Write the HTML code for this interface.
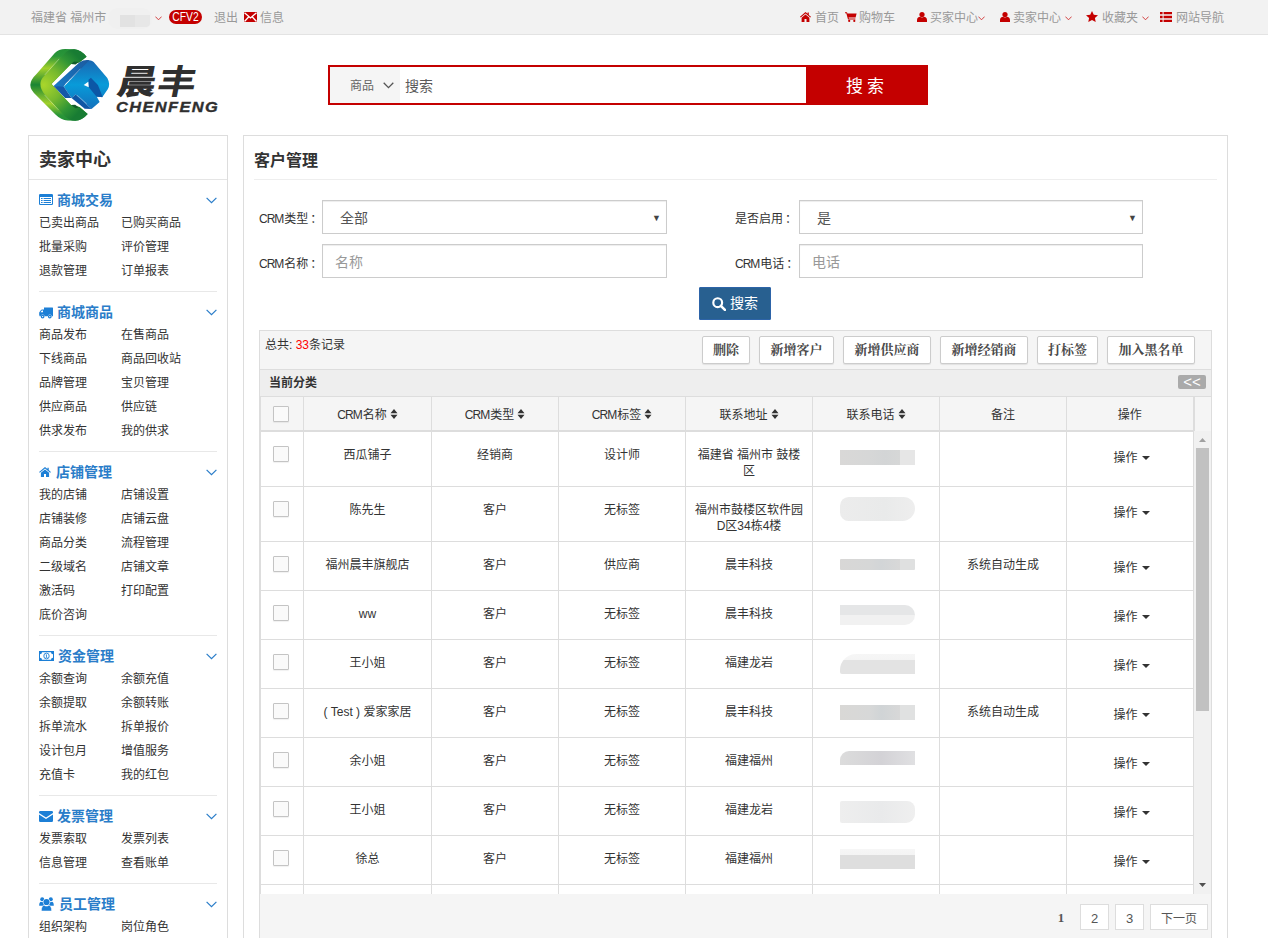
<!DOCTYPE html>
<html lang="zh-CN">
<head>
<meta charset="utf-8">
<title>客户管理</title>
<style>
*{box-sizing:border-box;margin:0;padding:0}
html,body{width:1268px;height:938px;overflow:hidden;background:#fff}
body{font-family:"Liberation Sans","Noto Sans CJK SC",sans-serif;font-size:12px;color:#333;position:relative}
a{color:inherit;text-decoration:none}
svg{display:block}
.abs{position:absolute}
/* top bar */
#topbar{position:absolute;left:0;top:0;width:1268px;height:35px;background:#f2f2f2;border-bottom:1px solid #e3e3e3;color:#999}
#topbar .t{position:absolute;top:0;height:34px;line-height:36px;white-space:nowrap;font-size:12px}
#topbar .i{position:absolute}
.red{color:#c40000}
/* search */
#search{position:absolute;left:328px;top:65px;width:600px;height:40px;border:2px solid #c40000;background:#fff}
#search .cat{position:absolute;left:0;top:0;width:70px;height:36px;background:#f5f5f5;color:#666;font-size:12px;line-height:38px}
#search .kw{position:absolute;left:75px;top:0;height:36px;line-height:38px;font-size:14px;color:#5a5a5a}
#search .btn{position:absolute;left:476px;top:-2px;width:122px;height:40px;background:#c40000;color:#fff;font-size:17px;line-height:43px;text-align:center;letter-spacing:4px;overflow:hidden}
/* sidebar */
#side{position:absolute;left:28px;top:135px;width:200px;height:820px;border:1px solid #ddd;background:#fff}
#side h2{height:44px;line-height:48px;padding-left:10px;font-size:18px;font-weight:bold;color:#333;border-bottom:1px solid #e5e5e5}
.sec{margin:0 10px;padding:9px 0 8px;border-bottom:1px solid #e8e8e8;position:relative}
.sec h3{height:22px;line-height:22px;font-size:14px;font-weight:bold;color:#2a7dc9;position:relative;padding-left:19px}
.sec h3 svg{position:absolute;left:0;top:5px}
.sec h3 .chev{position:absolute;left:167px;top:8px}
.sec ul{list-style:none;overflow:hidden}
.sec li{float:left;width:82px;height:24px;line-height:24px;font-size:12px;color:#333;white-space:nowrap}
/* main */
#main{position:absolute;left:243px;top:135px;width:985px;height:820px;border:1px solid #ddd;background:#fff}
#main h1{position:absolute;left:10px;top:0;width:963px;height:44px;line-height:50px;overflow:hidden;font-size:16px;font-weight:bold;color:#333;border-bottom:1px solid #eee}
.lbl{position:absolute;font-size:12px;color:#333;height:34px;line-height:36px;white-space:nowrap}
.la{letter-spacing:-1px;margin-right:1px}
.co{margin-left:2px}
.fld{position:absolute;height:34px;border:1px solid #ccc;background:#fff;font-size:14px;line-height:34px;color:#555;box-shadow:inset 0 1px 1px rgba(0,0,0,.075);overflow:hidden}
.fld.ph{color:#999}
.fld .arr{position:absolute;right:5px;top:0;font-size:9px;color:#444}
#sbtn{position:absolute;left:455px;top:151px;width:72px;height:33px;background:#286090;border:1px solid #2d64a8;border-radius:1px;color:#fff;font-size:14px;line-height:31px}
#panel{position:absolute;left:15px;top:194px;width:953px;height:640px;border:1px solid #ddd;background:#f5f5f5}
.tb{position:absolute;top:5px;height:28px;border:1px solid #ccc;border-radius:2px;background:#fff;color:#4a4a4a;box-shadow:0 1px 1px rgba(0,0,0,.08);font-family:"Liberation Serif","Noto Serif CJK SC",serif;font-weight:bold;font-size:13px;line-height:26px;text-align:center;white-space:nowrap}
#cur{position:absolute;left:0;top:38px;width:951px;height:27px;background:#eee;border-top:1px solid #ddd;font-weight:bold;font-size:12px;line-height:27px;padding-left:9px}
#cur span{position:absolute;left:918px;top:5px;width:28px;height:14px;background:#aaa;color:#fff;border-radius:2px;font-size:15px;line-height:13px;text-align:center;font-weight:normal;letter-spacing:0}
table{border-collapse:collapse;table-layout:fixed;position:absolute;left:0;top:65px;background:#fff}
th,td{border:1px solid #ddd;text-align:center;font-weight:normal;font-size:12px;color:#333;vertical-align:top}
th{height:34px;background:#f5f5f5;border-bottom:2px solid #ddd;vertical-align:middle;padding-top:1px}
th:last-child{border-right:2px solid #ddd}
.cb{display:block;width:16px;height:16px;border:1px solid #c4c4c4;background:#fafafa;border-radius:1px;margin:0 0 0 12px;box-shadow:0 1px 1px rgba(0,0,0,.06)}

td.c{padding:15px 8px 0;line-height:16px}
#tw{position:absolute;left:0;top:0;width:951px;height:563px;overflow:hidden}
.bl{display:block;width:75px;margin:0 0 0 19px}
#vs{position:absolute;left:934px;top:100px;width:17px;height:463px;background:#f1f1f1}
#vs i{position:absolute;left:2px;top:17px;width:13px;height:263px;background:#c1c1c1}
.pg{position:absolute;top:573px;height:26px;border:1px solid #ddd;background:#fff;font-size:13px;line-height:27px;text-align:center;color:#555;overflow:hidden}
</style>
</head>
<body>
<div id="topbar">
<span class="t" style="left:31px">福建省 福州市</span>
<span class="i" style="left:108px;top:8px;width:44px;height:21px;background:#f0f0f0;border-radius:10px"></span><span class="i" style="left:120px;top:15px;width:30px;height:12px;background:linear-gradient(90deg,#e2e2e2 0,#e2e2e2 50%,#e7e7e7 50%,#e7e7e7 100%);border-radius:0 0 4px 0"></span>
<svg class="i" style="left:155px;top:16px" width="7" height="5" viewBox="0 0 7 5"><path d="M0.4 0.6 L3.5 3.8 L6.6 0.6" fill="none" stroke="#cf3030" stroke-width="0.9"/></svg>
<span class="i" style="left:169px;top:10px;width:33px;height:14px;border-radius:7px;background:#c40000;color:#fff;font-size:12px;line-height:15px;text-align:center"><b style="display:block;font-weight:normal;transform:scaleX(.86)">CFV2</b></span>
<span class="t" style="left:214px">退出</span>
<svg class="i" style="left:244px;top:12px" width="13" height="10" viewBox="0 0 13 10"><rect width="13" height="10" fill="#c40000"/><path d="M0.5 0.8 L6.5 6 L12.5 0.8 M0.5 9.5 L4.6 5 M12.5 9.5 L8.4 5" fill="none" stroke="#fff" stroke-width="1.3"/></svg>
<span class="t" style="left:260px">信息</span>

<svg class="i" style="left:800px;top:12px" width="11" height="10" viewBox="0 0 11 10"><path d="M5.5 0 L0 4.8 L0.7 5.6 L5.5 1.5 L10.3 5.6 L11 4.8 L8.8 2.9 V0.6 H7.6 V1.8 Z" fill="#c40000"/><path d="M5.5 2.4 L1.6 5.8 V10 H4.5 V7 H6.5 V10 H9.4 V5.8 Z" fill="#c40000"/></svg>
<span class="t" style="left:815px">首页</span>
<svg class="i" style="left:845px;top:12px" width="12" height="10" viewBox="0 0 12 10"><path d="M0 0.3 H2 L2.4 1.4 H11.6 L10.6 5.6 H3.6 L3.9 6.6 H10.4 V7.5 H3 L1.3 1.2 H0 Z" fill="#c40000"/><circle cx="4.2" cy="8.9" r="1.1" fill="#c40000"/><circle cx="9.3" cy="8.9" r="1.1" fill="#c40000"/></svg>
<span class="t" style="left:859px">购物车</span>
<svg class="i" style="left:917px;top:12px" width="10" height="10" viewBox="0 0 10 10"><circle cx="5" cy="2.6" r="2.6" fill="#c40000"/><path d="M0 10 V8 C0 5.8 1.8 5 3 4.8 C4 5.8 6 5.8 7 4.8 C8.2 5 10 5.8 10 8 V10 Z" fill="#c40000"/></svg>
<span class="t" style="left:930px">买家中心</span>
<svg class="i" style="left:978px;top:16px" width="7" height="5" viewBox="0 0 7 5"><path d="M0.4 0.6 L3.5 3.8 L6.6 0.6" fill="none" stroke="#cf3030" stroke-width="0.9"/></svg>
<svg class="i" style="left:1000px;top:12px" width="10" height="10" viewBox="0 0 10 10"><circle cx="5" cy="2.6" r="2.6" fill="#c40000"/><path d="M0 10 V8 C0 5.8 1.8 5 3 4.8 C4 5.8 6 5.8 7 4.8 C8.2 5 10 5.8 10 8 V10 Z" fill="#c40000"/></svg>
<span class="t" style="left:1013px">卖家中心</span>
<svg class="i" style="left:1065px;top:16px" width="7" height="5" viewBox="0 0 7 5"><path d="M0.4 0.6 L3.5 3.8 L6.6 0.6" fill="none" stroke="#cf3030" stroke-width="0.9"/></svg>
<svg class="i" style="left:1086px;top:11px" width="12" height="11" viewBox="0 0 12 11"><path d="M6 0 L7.8 3.8 L12 4.3 L8.9 7.1 L9.7 11 L6 9 L2.3 11 L3.1 7.1 L0 4.3 L4.2 3.8 Z" fill="#c40000"/></svg>
<span class="t" style="left:1102px">收藏夹</span>
<svg class="i" style="left:1142px;top:16px" width="7" height="5" viewBox="0 0 7 5"><path d="M0.4 0.6 L3.5 3.8 L6.6 0.6" fill="none" stroke="#cf3030" stroke-width="0.9"/></svg>
<svg class="i" style="left:1160px;top:12px" width="12" height="10" viewBox="0 0 12 10"><path d="M0 0 H2.6 V2.3 H0 Z M3.6 0 H12 V2.3 H3.6 Z M0 3.85 H2.6 V6.15 H0 Z M3.6 3.85 H12 V6.15 H3.6 Z M0 7.7 H2.6 V10 H0 Z M3.6 7.7 H12 V10 H3.6 Z" fill="#c40000"/></svg>
<span class="t" style="left:1176px">网站导航</span>
</div>
<div id="logo">
<svg class="abs" style="left:25px;top:44px" width="90" height="80" viewBox="0 0 1055 938">
<defs>
<linearGradient id="gs" x1="0" y1="0" x2="0" y2="1"><stop offset="0" stop-color="#238f37"/><stop offset="0.1" stop-color="#2a9638"/><stop offset="0.27" stop-color="#a2d02c"/><stop offset="0.5" stop-color="#1a8534"/><stop offset="0.76" stop-color="#a2d02c"/><stop offset="0.92" stop-color="#2a9638"/><stop offset="1" stop-color="#238f37"/></linearGradient>
<radialGradient id="gf" gradientUnits="userSpaceOnUse" cx="220" cy="480" r="520"><stop offset="0" stop-color="#a9d62b"/><stop offset="0.4" stop-color="#77b92e"/><stop offset="0.75" stop-color="#2f9535"/><stop offset="1" stop-color="#187c33"/></radialGradient>
<linearGradient id="bf" gradientUnits="userSpaceOnUse" x1="0" y1="190" x2="0" y2="765"><stop offset="0" stop-color="#1a66b2"/><stop offset="0.5" stop-color="#089bd9"/><stop offset="1" stop-color="#1470bc"/></linearGradient>
<linearGradient id="bb" gradientUnits="userSpaceOnUse" x1="340" y1="490" x2="760" y2="190"><stop offset="0" stop-color="#1879c4"/><stop offset="1" stop-color="#1c5a9f"/></linearGradient>
</defs>
<path d="M62 480 Q62 420 140 345 L350 105 Q395 58 470 58 L580 62 Q660 70 722 150 L640 215 L540 235 L310 470 L540 715 L640 740 L735 820 Q670 895 590 900 L500 898 Q420 890 360 830 L140 610 Q62 540 62 480 Z" fill="url(#gs)"/>
<path d="M180 470 Q180 420 230 370 L480 95 Q520 58 580 62 Q660 70 722 150 L640 215 L590 225 L540 235 L310 470 L540 715 L590 730 L640 740 L735 820 Q670 895 590 900 Q520 900 470 850 L230 590 Q180 530 180 470 Z" fill="url(#gf)"/>
<path d="M232 362 L400 175 M228 596 L392 772" stroke="#fff" stroke-width="7" opacity="0.55" fill="none"/>
<path d="M540 235 L575 206 L632 212 L592 240 Z M540 715 L592 752 L632 746 L588 712 Z" fill="#125c2a"/>
<path d="M335 492 L640 215 Q690 180 745 188 L770 200 L480 460 L440 520 Z" fill="url(#bb)"/>
<path d="M455 500 L745 200 Q775 180 805 210 L965 400 Q1005 475 970 530 L905 625 L840 615 L875 680 L780 762 L595 592 L545 632 Z" fill="url(#bf)"/>
<path d="M335 492 L455 500 L545 632 L470 632 Z" fill="#1558a8"/>
<path d="M545 632 L595 592 L780 762 L700 760 Z" fill="#0e56a5"/>
<path d="M745 420 L772 395 L855 480 L910 622 L840 618 L745 505 Z" fill="#0c57a6"/>
<path d="M688 480 L742 442 L747 508 Z" fill="#fff"/>
<path d="M515 425 L650 290 M610 600 L725 700" stroke="#fff" stroke-width="6" opacity="0.6" fill="none"/>
</svg>
<span class="abs" style="left:118px;top:58px;font-family:'Liberation Sans','Noto Sans CJK SC',sans-serif;font-weight:900;font-size:34px;line-height:48px;color:#2f2f2f;white-space:nowrap;transform-origin:0 50%;transform:skewX(-11deg) scaleX(1.14);letter-spacing:1px">晨<span style="font-weight:700">丰</span></span>
<span class="abs" style="left:116px;top:97px;font-family:'Liberation Sans',sans-serif;font-weight:bold;font-style:italic;font-size:14px;line-height:20px;color:#2f2f2f;-webkit-text-stroke:0.35px #2f2f2f;white-space:nowrap;letter-spacing:1.2px;transform-origin:0 50%;transform:scaleX(1.17)">CHENFENG</span>
</div>
<div id="search">
<div class="cat"><span style="position:absolute;left:20px">商品</span><svg style="position:absolute;left:53px;top:15px" width="11" height="7" viewBox="0 0 11 7"><path d="M0.7 0.8 L5.5 5.6 L10.3 0.8" fill="none" stroke="#555" stroke-width="1.3"/></svg></div>
<div class="kw">搜索</div>
<div class="btn">搜索</div>
</div>
<div id="side">
<h2>卖家中心</h2>
<div class="sec"><h3 style="padding-left:18px"><svg width="14" height="11" viewBox="0 0 14 11"><path d="M1.2 0 H12.8 Q14 0 14 1.2 V9.8 Q14 11 12.8 11 H1.2 Q0 11 0 9.8 V1.2 Q0 0 1.2 0 Z M1 3 V9.6 Q1 10 1.4 10 H12.6 Q13 10 13 9.6 V3 Z M2 4 H3.6 V5 H2 Z M4.6 4 H12 V5 H4.6 Z M2 6 H3.6 V7 H2 Z M4.6 6 H12 V7 H4.6 Z M2 8 H3.6 V9 H2 Z M4.6 8 H12 V9 H4.6 Z" fill="#1c7fd6" fill-rule="evenodd"/></svg>商城交易<svg class="chev" width="11" height="7" viewBox="0 0 11 7"><path d="M0.6 0.8 L5.5 5.7 L10.4 0.8" fill="none" stroke="#2a7dc9" stroke-width="1.2"/></svg></h3><ul><li>已卖出商品</li><li>已购买商品</li><li>批量采购</li><li>评价管理</li><li>退款管理</li><li>订单报表</li></ul></div>
<div class="sec"><h3 style="padding-left:18px"><svg style="top:6px" width="14" height="12" viewBox="0 0 14 12"><path d="M5 0.4 H13.5 Q14 0.4 14 0.9 V9.3 H0.6 V8.6 H0.2 V5.4 L2 3 Q2.4 2.5 3 2.5 H5 Z M1.5 5.3 H4 V3.5 H2.9 Z" fill="#1c7fd6" fill-rule="evenodd"/><circle cx="3.6" cy="9.6" r="2" fill="#fff"/><circle cx="10.8" cy="9.6" r="2" fill="#fff"/><circle cx="3.6" cy="9.6" r="1.3" fill="none" stroke="#1c7fd6" stroke-width="1.2"/><circle cx="10.8" cy="9.6" r="1.3" fill="none" stroke="#1c7fd6" stroke-width="1.2"/></svg>商城商品<svg class="chev" width="11" height="7" viewBox="0 0 11 7"><path d="M0.6 0.8 L5.5 5.7 L10.4 0.8" fill="none" stroke="#2a7dc9" stroke-width="1.2"/></svg></h3><ul><li>商品发布</li><li>在售商品</li><li>下线商品</li><li>商品回收站</li><li>品牌管理</li><li>宝贝管理</li><li>供应商品</li><li>供应链</li><li>供求发布</li><li>我的供求</li></ul></div>
<div class="sec"><h3 style="padding-left:17px"><svg style="top:6px" width="12" height="10" viewBox="0 0 13 11"><path d="M6.5 0 L0 5.4 L0.8 6.3 L6.5 1.6 L12.2 6.3 L13 5.4 L10.6 3.4 V0.8 H9.2 V2.2 Z" fill="#1c7fd6"/><path d="M6.5 2.7 L2 6.4 V11 H5.4 V7.8 H7.6 V11 H11 V6.4 Z" fill="#1c7fd6"/></svg>店铺管理<svg class="chev" width="11" height="7" viewBox="0 0 11 7"><path d="M0.6 0.8 L5.5 5.7 L10.4 0.8" fill="none" stroke="#2a7dc9" stroke-width="1.2"/></svg></h3><ul><li>我的店铺</li><li>店铺设置</li><li>店铺装修</li><li>店铺云盘</li><li>商品分类</li><li>流程管理</li><li>二级域名</li><li>店铺文章</li><li>激活码</li><li>打印配置</li><li>底价咨询</li></ul></div>
<div class="sec"><h3 style="padding-left:19px"><svg style="top:6px" width="15" height="10" viewBox="0 0 15 10"><rect width="15" height="10" fill="#1c7fd6"/><path d="M3 1.2 H12 A2 2 0 0 0 14 3.2 V6.8 A2 2 0 0 0 12 8.8 H3 A2 2 0 0 0 1 6.8 V3.2 A2 2 0 0 0 3 1.2 Z" fill="#fff"/><ellipse cx="7.5" cy="5" rx="2.7" ry="2.9" fill="none" stroke="#1c7fd6" stroke-width="0.9"/><path d="M7.1 3.4 H7.95 V6.2 H8.6 V6.8 H6.5 V6.2 H7.15 V4.2 H6.6 V3.8 Z" fill="#1c7fd6"/></svg>资金管理<svg class="chev" width="11" height="7" viewBox="0 0 11 7"><path d="M0.6 0.8 L5.5 5.7 L10.4 0.8" fill="none" stroke="#2a7dc9" stroke-width="1.2"/></svg></h3><ul><li>余额查询</li><li>余额充值</li><li>余额提取</li><li>余额转账</li><li>拆单流水</li><li>拆单报价</li><li>设计包月</li><li>增值服务</li><li>充值卡</li><li>我的红包</li></ul></div>
<div class="sec"><h3 style="padding-left:18px"><svg style="top:6px" width="14" height="11" viewBox="0 0 14 11"><path d="M1.2 0 H12.8 Q14 0 14 1.2 V2 L7 6.6 L0 2 V1.2 Q0 0 1.2 0 Z" fill="#1c7fd6"/><path d="M0 3.4 L7 8 L14 3.4 V9.8 Q14 11 12.8 11 H1.2 Q0 11 0 9.8 Z" fill="#1c7fd6"/></svg>发票管理<svg class="chev" width="11" height="7" viewBox="0 0 11 7"><path d="M0.6 0.8 L5.5 5.7 L10.4 0.8" fill="none" stroke="#2a7dc9" stroke-width="1.2"/></svg></h3><ul><li>发票索取</li><li>发票列表</li><li>信息管理</li><li>查看账单</li></ul></div>
<div class="sec"><h3 style="padding-left:20px"><svg style="top:4px" width="15" height="14" viewBox="0 0 15 14"><circle cx="3.2" cy="2.3" r="2" fill="#1c7fd6"/><circle cx="11.8" cy="2.3" r="2" fill="#1c7fd6"/><path d="M0.2 8.4 C0.2 6 1 5 2 4.8 C3 5.4 4 5.2 4.6 4.8 L5.6 8.6 L3 8.8 H0.6 Q0.2 8.8 0.2 8.4 Z M14.8 8.4 C14.8 6 14 5 13 4.8 C12 5.4 11 5.2 10.4 4.8 L9.4 8.6 L12 8.8 H14.4 Q14.8 8.8 14.8 8.4 Z" fill="#1c7fd6"/><circle cx="7.5" cy="5" r="3.6" fill="#fff"/><circle cx="7.5" cy="5" r="3.1" fill="#1c7fd6"/><path d="M3 14 Q2.4 14 2.4 13.2 C2.4 10.2 3.8 8.4 5 8.2 C6.4 9.4 8.6 9.4 10 8.2 C11.2 8.4 12.6 10.2 12.6 13.2 Q12.6 14 12 14 Z" fill="#1c7fd6" stroke="#fff" stroke-width="0.5"/></svg>员工管理<svg class="chev" width="11" height="7" viewBox="0 0 11 7"><path d="M0.6 0.8 L5.5 5.7 L10.4 0.8" fill="none" stroke="#2a7dc9" stroke-width="1.2"/></svg></h3><ul><li>组织架构</li><li>岗位角色</li><li>员工管理</li><li>权限设置</li></ul></div>
</div>
<div id="main">
<h1>客户管理</h1>
<span class="lbl" style="left:15px;top:65px"><span class="la">CRM</span>类型<span class="co">：</span></span>
<div class="fld" style="left:78px;top:64px;width:345px;padding-left:17px">全部<span class="arr">&#9660;</span></div>
<span class="lbl" style="left:491px;top:65px">是否启用<span class="co">：</span></span>
<div class="fld" style="left:555px;top:64px;width:344px;padding-left:17px">是<span class="arr">&#9660;</span></div>
<span class="lbl" style="left:15px;top:110px"><span class="la">CRM</span>名称<span class="co">：</span></span>
<div class="fld ph" style="left:78px;top:108px;width:345px;padding-left:12px">名称</div>
<span class="lbl" style="left:491px;top:110px"><span class="la">CRM</span>电话<span class="co">：</span></span>
<div class="fld ph" style="left:555px;top:108px;width:344px;padding-left:12px">电话</div>
<div id="sbtn"><svg style="position:absolute;left:12px;top:9px" width="14" height="14" viewBox="0 0 13 13"><circle cx="5.3" cy="5.3" r="4.1" fill="none" stroke="#fff" stroke-width="2"/><path d="M8.2 8.2 L12 12" stroke="#fff" stroke-width="2.4" stroke-linecap="round"/></svg><span style="position:absolute;left:30px;top:0">搜索</span></div>
<div id="panel">
<span class="abs" style="left:5px;top:5px;line-height:18px;font-size:12px;white-space:nowrap">总共: <span style="color:#f00">33</span>条记录</span>
<span class="tb" style="left:442px;width:48px">删除</span>
<span class="tb" style="left:499px;width:75px">新增客户</span>
<span class="tb" style="left:583px;width:88px">新增供应商</span>
<span class="tb" style="left:680px;width:88px">新增经销商</span>
<span class="tb" style="left:777px;width:61px">打标签</span>
<span class="tb" style="left:847px;width:88px">加入黑名单</span>
<div id="cur">当前分类<span>&lt;&lt;</span></div>
<div id="tw">
<table>
<colgroup><col style="width:43px"><col style="width:128px"><col style="width:127px"><col style="width:127px"><col style="width:127px"><col style="width:127px"><col style="width:127px"><col style="width:127px"></colgroup>
<tr><th><i class="cb"></i></th><th><span class="la">CRM</span>名称<svg style="display:inline-block;vertical-align:middle;margin-left:3px;margin-top:-4px" width="8" height="10" viewBox="0 0 7 10"><path d="M3.5 0 L7 4.2 H0 Z M0 5.8 H7 L3.5 10 Z" fill="#333"/></svg></th><th><span class="la">CRM</span>类型<svg style="display:inline-block;vertical-align:middle;margin-left:3px;margin-top:-4px" width="8" height="10" viewBox="0 0 7 10"><path d="M3.5 0 L7 4.2 H0 Z M0 5.8 H7 L3.5 10 Z" fill="#333"/></svg></th><th><span class="la">CRM</span>标签<svg style="display:inline-block;vertical-align:middle;margin-left:3px;margin-top:-4px" width="8" height="10" viewBox="0 0 7 10"><path d="M3.5 0 L7 4.2 H0 Z M0 5.8 H7 L3.5 10 Z" fill="#333"/></svg></th><th>联系地址<svg style="display:inline-block;vertical-align:middle;margin-left:3px;margin-top:-4px" width="8" height="10" viewBox="0 0 7 10"><path d="M3.5 0 L7 4.2 H0 Z M0 5.8 H7 L3.5 10 Z" fill="#333"/></svg></th><th>联系电话<svg style="display:inline-block;vertical-align:middle;margin-left:3px;margin-top:-4px" width="8" height="10" viewBox="0 0 7 10"><path d="M3.5 0 L7 4.2 H0 Z M0 5.8 H7 L3.5 10 Z" fill="#333"/></svg></th><th>备注</th><th>操作</th></tr>
<tr style="height:56px"><td style="padding-top:14px"><i class="cb"></i></td><td class="c">西瓜铺子</td><td class="c">经销商</td><td class="c">设计师</td><td class="c">福建省 福州市 鼓楼<br>区</td><td class="c"><i class="bl" style="background:linear-gradient(90deg,#d9d8d7 0,#d6d7d7 40%,#d3d5d6 60%,#d6d7d7 80%,#e6e6e6 80%,#e6e6e6 100%);height:15px;margin-top:3px"></i></td><td class="c"></td><td class="c" style="padding:18px 5px 0 8px">操作<svg style="display:inline-block;vertical-align:middle;margin-left:4px;margin-top:-1px" width="8" height="4" viewBox="0 0 8 4"><path d="M0 0 H8 L4 4 Z" fill="#333"/></svg></td></tr>
<tr style="height:55px"><td style="padding-top:14px"><i class="cb"></i></td><td class="c">陈先生</td><td class="c">客户</td><td class="c">无标签</td><td class="c">福州市鼓楼区软件园<br>D区34栋4楼</td><td class="c"><i class="bl" style="background:linear-gradient(90deg,#ececec,#e9eaea 60%,#eeeeee);height:24px;margin-top:-5px;border-radius:9px 12px 13px 9px"></i></td><td class="c"></td><td class="c" style="padding:18px 5px 0 8px">操作<svg style="display:inline-block;vertical-align:middle;margin-left:4px;margin-top:-1px" width="8" height="4" viewBox="0 0 8 4"><path d="M0 0 H8 L4 4 Z" fill="#333"/></svg></td></tr>
<tr style="height:49px"><td style="padding-top:14px"><i class="cb"></i></td><td class="c">福州晨丰旗舰店</td><td class="c">客户</td><td class="c">供应商</td><td class="c">晨丰科技</td><td class="c"><i class="bl" style="background:linear-gradient(90deg,#d8d7d6 0,#d6d7d7 40%,#d2d5d7 55%,#d8d8d8 80%,#dfe0e0 80%,#dfe0e0 100%);height:11px;margin-top:2px;border-radius:1px"></i></td><td class="c">系统自动生成</td><td class="c" style="padding:18px 5px 0 8px">操作<svg style="display:inline-block;vertical-align:middle;margin-left:4px;margin-top:-1px" width="8" height="4" viewBox="0 0 8 4"><path d="M0 0 H8 L4 4 Z" fill="#333"/></svg></td></tr>
<tr style="height:49px"><td style="padding-top:14px"><i class="cb"></i></td><td class="c">ww</td><td class="c">客户</td><td class="c">无标签</td><td class="c">晨丰科技</td><td class="c"><i class="bl" style="background:linear-gradient(180deg,#e5e6e7 0,#e5e6e7 50%,#f1f1f1 50%,#f1f1f1 100%);height:20px;margin-top:-1px;border-radius:0 10px 10px 0"></i></td><td class="c"></td><td class="c" style="padding:18px 5px 0 8px">操作<svg style="display:inline-block;vertical-align:middle;margin-left:4px;margin-top:-1px" width="8" height="4" viewBox="0 0 8 4"><path d="M0 0 H8 L4 4 Z" fill="#333"/></svg></td></tr>
<tr style="height:49px"><td style="padding-top:14px"><i class="cb"></i></td><td class="c">王小姐</td><td class="c">客户</td><td class="c">无标签</td><td class="c">福建龙岩</td><td class="c"><i class="bl" style="background:linear-gradient(180deg,#f6f6f6 0,#f4f4f4 30%,#e3e3e3 30%,#e3e3e3 100%);height:20px;margin-top:-1px;border-radius:16px 0 0 2px"></i></td><td class="c"></td><td class="c" style="padding:18px 5px 0 8px">操作<svg style="display:inline-block;vertical-align:middle;margin-left:4px;margin-top:-1px" width="8" height="4" viewBox="0 0 8 4"><path d="M0 0 H8 L4 4 Z" fill="#333"/></svg></td></tr>
<tr style="height:49px"><td style="padding-top:14px"><i class="cb"></i></td><td class="c">( Test ) 爱家家居</td><td class="c">客户</td><td class="c">无标签</td><td class="c">晨丰科技</td><td class="c"><i class="bl" style="background:linear-gradient(90deg,#d9d8d6 0,#d7d8d8 40%,#d0d4d6 55%,#d8d8d8 80%,#e0e1e1 80%,#e0e1e1 100%);height:15px;margin-top:1px"></i></td><td class="c">系统自动生成</td><td class="c" style="padding:18px 5px 0 8px">操作<svg style="display:inline-block;vertical-align:middle;margin-left:4px;margin-top:-1px" width="8" height="4" viewBox="0 0 8 4"><path d="M0 0 H8 L4 4 Z" fill="#333"/></svg></td></tr>
<tr style="height:49px"><td style="padding-top:14px"><i class="cb"></i></td><td class="c">余小姐</td><td class="c">客户</td><td class="c">无标签</td><td class="c">福建福州</td><td class="c"><i class="bl" style="background:linear-gradient(90deg,#dcdcdc,#d3d2d6 55%,#e0e0e2);height:14px;margin-top:-2px;border-radius:9px 0 0 0"></i></td><td class="c"></td><td class="c" style="padding:18px 5px 0 8px">操作<svg style="display:inline-block;vertical-align:middle;margin-left:4px;margin-top:-1px" width="8" height="4" viewBox="0 0 8 4"><path d="M0 0 H8 L4 4 Z" fill="#333"/></svg></td></tr>
<tr style="height:49px"><td style="padding-top:14px"><i class="cb"></i></td><td class="c">王小姐</td><td class="c">客户</td><td class="c">无标签</td><td class="c">福建龙岩</td><td class="c"><i class="bl" style="background:linear-gradient(90deg,#eeeeee,#e9eaeb 55%,#efefef);height:22px;margin-top:-1px;border-radius:2px 8px 9px 2px"></i></td><td class="c"></td><td class="c" style="padding:18px 5px 0 8px">操作<svg style="display:inline-block;vertical-align:middle;margin-left:4px;margin-top:-1px" width="8" height="4" viewBox="0 0 8 4"><path d="M0 0 H8 L4 4 Z" fill="#333"/></svg></td></tr>
<tr style="height:49px"><td style="padding-top:14px"><i class="cb"></i></td><td class="c">徐总</td><td class="c">客户</td><td class="c">无标签</td><td class="c">福建福州</td><td class="c"><i class="bl" style="background:linear-gradient(180deg,#f6f6f6 0,#f4f4f4 28%,#dedede 28%,#dedede 100%);height:20px;margin-top:-2px"></i></td><td class="c"></td><td class="c" style="padding:18px 5px 0 8px">操作<svg style="display:inline-block;vertical-align:middle;margin-left:4px;margin-top:-1px" width="8" height="4" viewBox="0 0 8 4"><path d="M0 0 H8 L4 4 Z" fill="#333"/></svg></td></tr>
<tr style="height:49px"><td style="padding-top:14px"><i class="cb"></i></td><td class="c">林先生</td><td class="c">客户</td><td class="c">无标签</td><td class="c">福建福州</td><td class="c"><i class="bl" style="background:#ddd;height:15px;margin-top:3px"></i></td><td class="c"></td><td class="c" style="padding:18px 5px 0 8px">操作<svg style="display:inline-block;vertical-align:middle;margin-left:4px;margin-top:-1px" width="8" height="4" viewBox="0 0 8 4"><path d="M0 0 H8 L4 4 Z" fill="#333"/></svg></td></tr>
</table>
</div>
<i class="abs" style="left:934px;top:65px;width:17px;height:1px;background:#ddd"></i>
<div id="vs"><i></i><svg style="position:absolute;left:5px;top:7px" width="7" height="4" viewBox="0 0 7 4"><path d="M0 4 H7 L3.5 0 Z" fill="#a0a0a0"/></svg><svg style="position:absolute;left:5px;top:452px" width="7" height="4" viewBox="0 0 7 4"><path d="M0 0 H7 L3.5 4 Z" fill="#505050"/></svg></div>
<span class="pg" style="left:791px;width:20px;border:0;background:none;font-weight:bold;font-family:'Liberation Serif',serif;font-size:13px;line-height:28px">1</span>
<span class="pg" style="left:820px;width:29px">2</span>
<span class="pg" style="left:855px;width:29px">3</span>
<span class="pg" style="left:890px;width:58px;font-size:12px;line-height:28px">下一页</span>
</div>
</div>
</body>
</html>
